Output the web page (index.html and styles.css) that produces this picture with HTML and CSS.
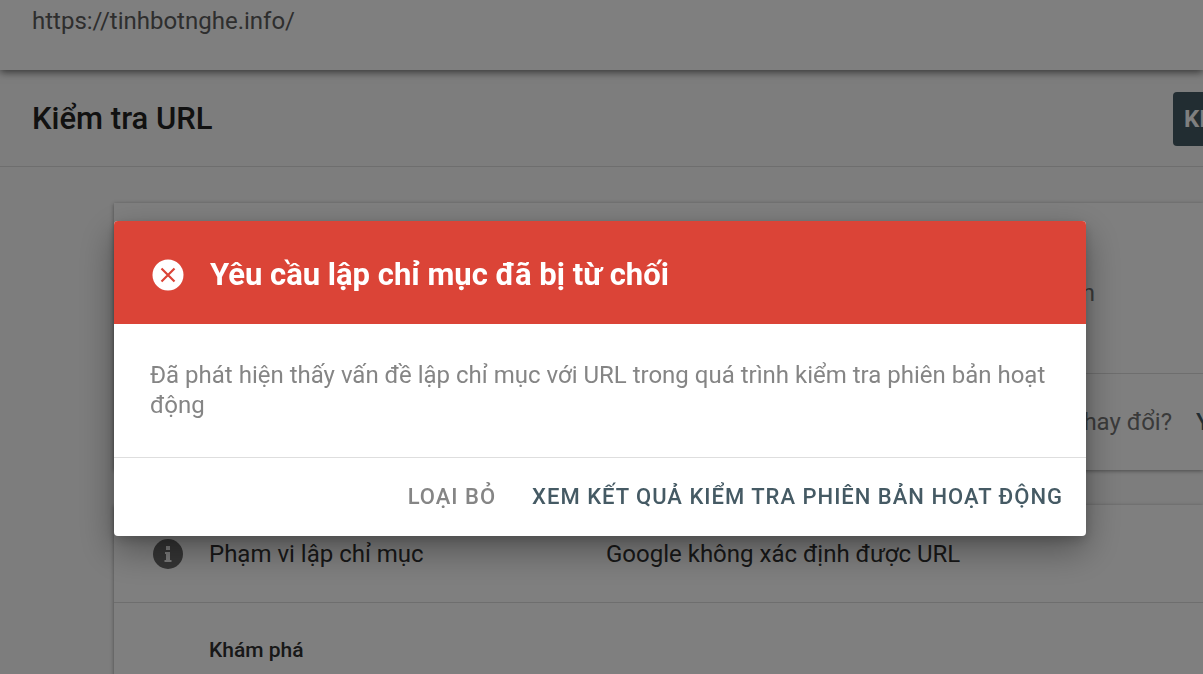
FILE: index.html
```html
<!DOCTYPE html>
<html lang="vi">
<head>
<meta charset="utf-8">
<meta name="viewport" content="width=device-width, initial-scale=1">
<title>Kiểm tra URL</title>
<link rel="stylesheet" href="styles.css">
</head>
<body>
<div class="page">
  <header class="url-bar">https://tinhbotnghe.info/</header>
  <div class="title-bar">
    <h1 class="page-title">Kiểm tra URL</h1>
    <button class="test-button" type="button">KI</button>
  </div>
  <main class="content">
    <section class="card">
      <div class="card-summary"><span>n</span></div>
      <div class="card-actions">
        <span>thay đổi?</span>
        <button class="request-button" type="button">Y</button>
      </div>
    </section>
    <section class="card">
      <div class="coverage-row">
        <svg class="icon" viewBox="0 0 32 32" aria-hidden="true">
          <circle cx="16" cy="16" r="15" fill="#6a6a6a"/>
          <path d="M14 8h4v4h-4zM13 14h5v8h1.500v2h-7v-2H14v-6h-1z" fill="#f4f4f4"/>
        </svg>
        <span>Phạm vi lập chỉ mục</span>
        <span>Google không xác định được URL</span>
      </div>
      <h2 class="section-title">Khám phá</h2>
    </section>
  </main>
</div>
<div class="scrim">
  <div class="dialog" role="alertdialog" aria-modal="true" aria-labelledby="dialog-title" aria-describedby="dialog-text">
    <div class="dialog-header">
      <svg class="icon" viewBox="0 0 32 32" aria-hidden="true">
        <circle cx="16" cy="16" r="15.500" fill="#fff"/>
        <path d="M9.500 9.500l13 13M22.500 9.500l-13 13" fill="none" stroke="#db4437" stroke-width="2.200"/>
      </svg>
      <h2 class="dialog-title" id="dialog-title">Yêu cầu lập chỉ mục đã bị từ chối</h2>
    </div>
    <p class="dialog-text" id="dialog-text">Đã phát hiện thấy vấn đề lập chỉ mục với URL trong quá trình kiểm tra phiên bản hoạt động</p>
    <div class="dialog-actions">
      <button class="action" type="button">LOẠI BỎ</button>
      <button class="action action-primary" type="button">XEM KẾT QUẢ KIỂM TRA PHIÊN BẢN HOẠT ĐỘNG</button>
    </div>
  </div>
</div>
</body>
</html>
```
FILE: styles.css
```css
* {
  box-sizing: border-box;
}

body {
  margin: 0;
  font-family: Roboto, "Noto Sans", sans-serif;
  font-size: 24px;
  line-height: 30px;
  color: #303030;
  background: #fafafa;
}

h1, h2, p {
  margin: 0;
}

button {
  font: inherit;
  border: 0;
  padding: 0;
  background: none;
  white-space: nowrap;
}

.page {
  height: 100vh;
  overflow: hidden;
}

.url-bar {
  position: relative;
  height: 70px;
  padding: 6px 32px;
  color: #5c5c5c;
  background: #fff;
  box-shadow: 0 2px 8px rgba(0, 0, 0, 0.6);
}

.title-bar {
  display: flex;
  align-items: center;
  justify-content: space-between;
  height: 97px;
  padding: 2px 0 0 32px;
  border-bottom: 1px solid #dcdcdc;
}

.page-title {
  font-size: 31px;
  line-height: 40px;
  font-weight: 500;
  color: #222;
}

.test-button {
  height: 54px;
  padding-left: 11px;
  border-radius: 4px 0 0 4px;
  font-weight: 700;
  color: #fff;
  background: #455a64;
  width: 30px;
  overflow: hidden;
  text-align: left;
}

.content {
  display: flex;
  flex-direction: column;
  gap: 35px;
  padding: 36px 0 0 114px;
}

.card {
  background: #fff;
  box-shadow: 0 1px 4px rgba(0, 0, 0, 0.4);
}

.card-summary {
  display: flex;
  justify-content: flex-end;
  align-items: center;
  height: 170px;
  padding: 10px 108px 0 0;
  color: #757575;
}

.card-actions {
  display: flex;
  justify-content: flex-end;
  align-items: center;
  gap: 24px;
  height: 97px;
  border-top: 1px solid #dcdcdc;
  color: #757575;
}

.request-button {
  width: 7px;
  overflow: hidden;
  font-weight: 500;
  color: #455a64;
  text-align: left;
}

.coverage-row {
  display: grid;
  grid-template-columns: 32px 372px 1fr;
  column-gap: 25px;
  align-items: center;
  height: 98px;
  padding-left: 38px;
  border-bottom: 1px solid #dcdcdc;
}

.icon {
  flex: none;
  width: 32px;
  height: 32px;
}

.section-title {
  padding: 32px 95px;
  font-size: 21px;
  line-height: 30px;
  font-weight: 500;
}

.scrim {
  position: fixed;
  inset: 0;
  padding: 221px 117px 0 114px;
  background: rgba(0, 0, 0, 0.5);
}

.dialog {
  border-radius: 4px;
  overflow: hidden;
  background: #fff;
  box-shadow: 0 14px 36px rgba(0, 0, 0, 0.36), 0 4px 12px rgba(0, 0, 0, 0.16);
}

.dialog-header {
  display: flex;
  align-items: center;
  gap: 26px;
  padding: 34px 38px 29px;
  color: #fff;
  background: #db4437;
}

.dialog-title {
  font-size: 31px;
  line-height: 40px;
  font-weight: 700;
}

.dialog-text {
  padding: 36px 36px 37px;
  color: #858585;
}

.dialog-actions {
  display: flex;
  justify-content: flex-end;
  gap: 36px;
  padding: 24px 23px;
  border-top: 1px solid #dedede;
}

.action {
  font-size: 22px;
  font-weight: 500;
  letter-spacing: 1px;
  color: #858585;
}

.action-primary {
  color: #455a64;
}
```
